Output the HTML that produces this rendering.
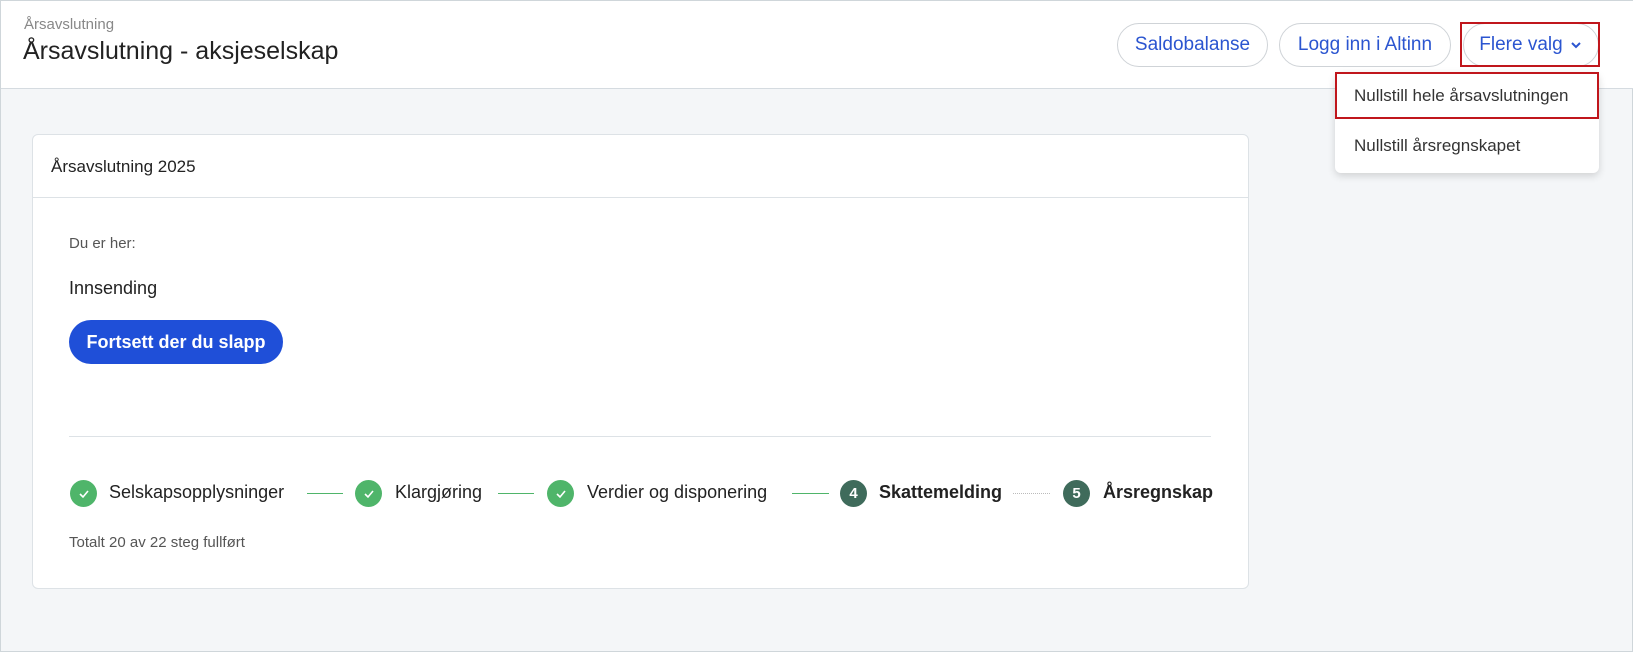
<!DOCTYPE html>
<html><head><meta charset="utf-8"><style>
*{box-sizing:border-box;margin:0;padding:0}
body{width:1633px;height:652px;background:#f4f6f8;font-family:"Liberation Sans",sans-serif;color:#222;position:relative;overflow:hidden;border:1px solid #cfd6da}
.hdr{position:absolute;left:0;top:0;width:1633px;height:88px;background:#fff;border-bottom:1px solid #d5dbe0}
.a{position:absolute}
.pill{position:absolute;top:22px;height:44px;border:1px solid #cfd3d7;border-radius:22px;color:#2b55d0;font-size:19px;display:flex;align-items:center;justify-content:center;background:#fff}
.card{position:absolute;left:31px;top:133px;width:1217px;height:455px;background:#fff;border:1px solid #dde2e6;border-radius:6px}
.chk{position:absolute;top:479px;width:27px;height:27px;border-radius:50%;background:#4fb56a;display:flex;align-items:center;justify-content:center}
.num{position:absolute;top:479px;width:27px;height:27px;border-radius:50%;background:#3f6b5b;color:#fff;font-size:15px;font-weight:bold;display:flex;align-items:center;justify-content:center}
.lbl{position:absolute;top:481px;font-size:18px;color:#222}
.ln{position:absolute;top:492px;height:1px;background:#4fb56a}
</style></head><body>
<div class="hdr">
<div class="a" style="left:23px;top:15px;font-size:15px;color:#888">Årsavslutning</div>
<div class="a" style="left:22px;top:36px;font-size:25px;color:#222">Årsavslutning - aksjeselskap</div>
<div class="pill" style="left:1116px;width:151px">Saldobalanse</div>
<div class="pill" style="left:1278px;width:172px">Logg inn i Altinn</div>
<div class="pill" style="left:1462px;width:136px">Flere valg <svg width="14" height="14" viewBox="0 0 14 14" style="margin-left:6px"><path d="M3 5l4 4 4-4" stroke="#2b55d0" stroke-width="2" fill="none"/></svg></div>
<div class="a" style="left:1459px;top:21px;width:140px;height:45px;border:2px solid #c0161c"></div>
</div>
<div class="a" style="left:1334px;top:71px;width:264px;height:101px;background:#fff;border-radius:6px;box-shadow:0 3px 8px rgba(0,0,0,.15)">
<div class="a" style="left:0;top:0;width:264px;height:47px;border:2px solid #c0161c"></div>
<div class="a" style="left:19px;top:14px;font-size:17px;color:#333">Nullstill hele årsavslutningen</div>
<div class="a" style="left:19px;top:64px;font-size:17px;color:#333">Nullstill årsregnskapet</div>
</div>
<div class="card">
<div class="a" style="left:18px;top:22px;font-size:17px;color:#222">Årsavslutning 2025</div>
<div class="a" style="left:0;top:62px;width:1215px;height:1px;background:#dde2e6"></div>
</div>
<div class="a" style="left:68px;top:234px;font-size:15px;color:#555">Du er her:</div>
<div class="a" style="left:68px;top:277px;font-size:18px;color:#222">Innsending</div>
<div class="a" style="left:68px;top:319px;width:214px;height:44px;border-radius:22px;background:#1f4fd8;color:#fff;font-size:18px;font-weight:bold;display:flex;align-items:center;justify-content:center">Fortsett der du slapp</div>
<div class="a" style="left:68px;top:435px;width:1142px;height:1px;background:#dde2e6"></div>
<div class="chk" style="left:69px"><svg width="14" height="14" viewBox="0 0 14 14"><path d="M3 7l3 3 5-6" stroke="#fff" stroke-width="1.6" fill="none"/></svg></div>
<div class="lbl" style="left:108px">Selskapsopplysninger</div>
<div class="ln" style="left:306px;width:36px"></div>
<div class="chk" style="left:354px"><svg width="14" height="14" viewBox="0 0 14 14"><path d="M3 7l3 3 5-6" stroke="#fff" stroke-width="1.6" fill="none"/></svg></div>
<div class="lbl" style="left:394px">Klargjøring</div>
<div class="ln" style="left:497px;width:36px"></div>
<div class="chk" style="left:546px"><svg width="14" height="14" viewBox="0 0 14 14"><path d="M3 7l3 3 5-6" stroke="#fff" stroke-width="1.6" fill="none"/></svg></div>
<div class="lbl" style="left:586px">Verdier og disponering</div>
<div class="ln" style="left:791px;width:37px"></div>
<div class="num" style="left:839px">4</div>
<div class="lbl" style="left:878px;font-weight:bold">Skattemelding</div>
<div class="a" style="left:1012px;top:492px;width:37px;border-top:1px dotted #bbb"></div>
<div class="num" style="left:1062px">5</div>
<div class="lbl" style="left:1102px;font-weight:bold">Årsregnskap</div>
<div class="a" style="left:68px;top:533px;font-size:15px;color:#555">Totalt 20 av 22 steg fullført</div>
</body></html>
